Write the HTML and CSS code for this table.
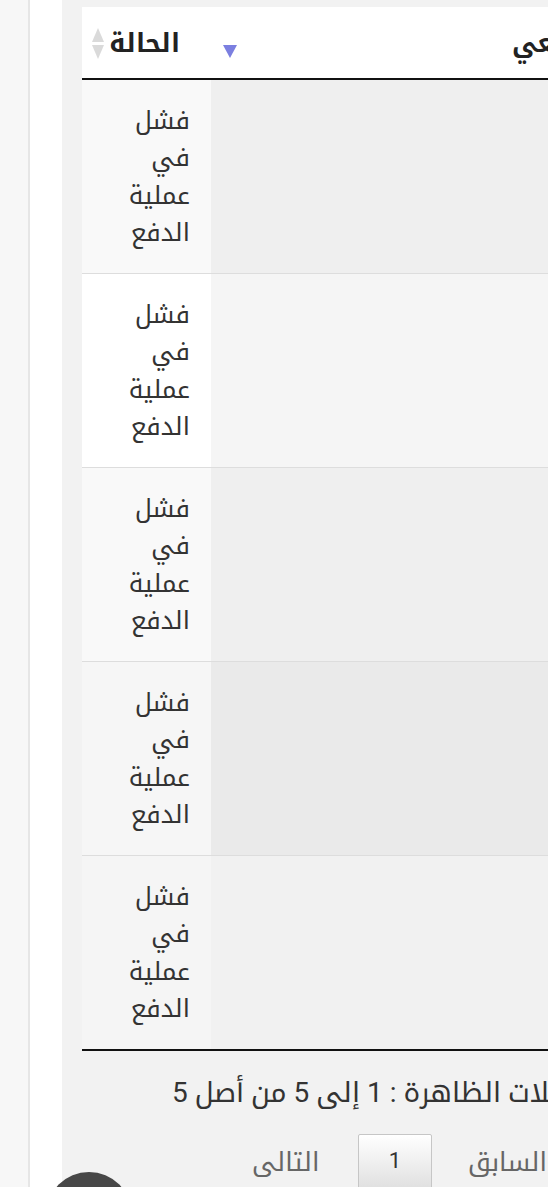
FILE: index.html
```html
<!DOCTYPE html>
<html lang="ar">
<head>
<meta charset="utf-8">
<title>المعاملات</title>
<link rel="stylesheet" href="styles.css">
</head>
<body>
<div class="layout">
  <aside class="rail"></aside>
  <div class="gutter"></div>
  <main class="main">
    <table class="grid">
      <thead>
        <tr>
          <th class="col-status"><span class="sort-both"></span><span class="label">الحالة</span></th>
          <th class="col-ref"><span class="sort-desc"></span><span class="label">الرقم المرجعي</span></th>
        </tr>
      </thead>
      <tbody>
        <tr class="r1"><td class="col-status">فشل في عملية الدفع</td><td class="col-ref"></td></tr>
        <tr class="r2"><td class="col-status">فشل في عملية الدفع</td><td class="col-ref"></td></tr>
        <tr class="r3"><td class="col-status">فشل في عملية الدفع</td><td class="col-ref"></td></tr>
        <tr class="r4"><td class="col-status">فشل في عملية الدفع</td><td class="col-ref"></td></tr>
        <tr class="r5"><td class="col-status">فشل في عملية الدفع</td><td class="col-ref"></td></tr>
      </tbody>
    </table>
    <div class="info">عدد السجلات الظاهرة : 1 إلى 5 من أصل 5</div>
    <div class="pager">
      <span class="page-link next">التالى</span>
      <span class="page-btn">1</span>
      <span class="page-link prev">السابق</span>
    </div>
  </main>
</div>
<div class="fab"></div>
</body>
</html>
```

FILE: styles.css
```css
html, body {
  margin: 0;
  padding: 0;
  height: 100%;
  overflow: hidden;
  background: #f2f2f2;
  font-family: "Roboto", "Noto Kufi Arabic", "Noto Sans Arabic", "DejaVu Sans", sans-serif;
  color: #333;
}

.layout {
  display: flex;
  height: 1187px;
}

.rail {
  width: 28px;
  flex: none;
  background: #f7f7f7;
  border-right: 2px solid #e6e6e6;
}

.gutter {
  width: 32px;
  flex: none;
  background: #ffffff;
}

.main {
  flex: 1;
  background: #f2f2f2;
  padding: 7px 0 0 20px;
  overflow: hidden;
  min-width: 0;
}

.grid {
  border-collapse: separate;
  border-spacing: 0;
  table-layout: fixed;
  width: 780px;
  border-bottom: 2px solid #111;
}

.grid th {
  background: #fff;
  height: 73px;
  padding: 0;
  border-bottom: 2px solid #111;
  font-weight: bold;
  font-size: 26px;
  vertical-align: middle;
  direction: rtl;
  white-space: nowrap;
}

.grid th.col-status {
  width: 129px;
  position: relative;
  text-align: right;
  padding-right: 31px;
  box-sizing: border-box;
}

.grid th.col-ref {
  width: 651px;
  position: relative;
  text-align: left;
  padding-left: 301px;
  box-sizing: border-box;
}

.label {
  display: inline-block;
  line-height: 28px;
  color: #222;
}

.sort-both {
  position: absolute;
  left: 10px;
  top: 21px;
  width: 13px;
  height: 32px;
}
.sort-both::before,
.sort-both::after {
  content: "";
  position: absolute;
  left: 0;
  border-left: 6.5px solid transparent;
  border-right: 6.5px solid transparent;
}
.sort-both::before {
  top: 0;
  border-bottom: 14px solid #dadada;
}
.sort-both::after {
  top: 17px;
  border-top: 14px solid #dadada;
}

.sort-desc {
  position: absolute;
  left: 12px;
  top: 38px;
  width: 0;
  height: 0;
  border-left: 7px solid transparent;
  border-right: 7px solid transparent;
  border-top: 13px solid #7b7fe0;
}

.grid td {
  height: 193px;
  padding: 0;
  vertical-align: middle;
  border-top: 1px solid #dddddd;
  font-size: 25px;
  line-height: 37.5px;
  color: #333;
  direction: rtl;
}

.grid tbody tr:first-child td {
  border-top: none;
}

.grid td.col-status {
  text-align: right;
  padding: 0 21px 0 30px;
  box-sizing: border-box;
}

.r1 .col-status { background: #f9f9f9; }
.r1 .col-ref { background: #efefef; }
.r2 .col-status { background: #ffffff; }
.r2 .col-ref { background: #f5f5f5; }
.r3 .col-status { background: #f9f9f9; }
.r3 .col-ref { background: #efefef; }
.r4 .col-status { background: #f6f6f6; }
.r4 .col-ref { background: #eaeaea; }
.r5 .col-status { background: #f5f5f5; }
.r5 .col-ref { background: #f1f1f1; }

.info {
  direction: rtl;
  width: max-content;
  white-space: nowrap;
  margin: 26px 0 0 90px;
  font-size: 28px;
  line-height: 32px;
  color: #333;
}

.pager {
  display: flex;
  align-items: flex-start;
  margin: 25px 0 0 170px;
  white-space: nowrap;
}

.page-link {
  font-size: 26px;
  line-height: 30px;
  color: #666;
  padding-top: 13px;
  direction: rtl;
  text-align: left;
}

.page-link.next {
  width: 106px;
  flex: none;
}

.page-link.prev {
  margin-left: 36px;
}

.page-btn {
  flex: none;
  box-sizing: border-box;
  width: 74px;
  height: 62px;
  border: 1px solid #c6c6c6;
  border-radius: 2px;
  background: linear-gradient(to bottom, #ffffff 0%, #dcdcdc 100%);
  font-size: 22px;
  color: #333;
  text-align: center;
  padding-top: 15px;
  line-height: 22px;
}

.fab {
  position: fixed;
  left: 46px;
  top: 1172px;
  width: 86px;
  height: 86px;
  border-radius: 50%;
  background: #474747;
}
```
